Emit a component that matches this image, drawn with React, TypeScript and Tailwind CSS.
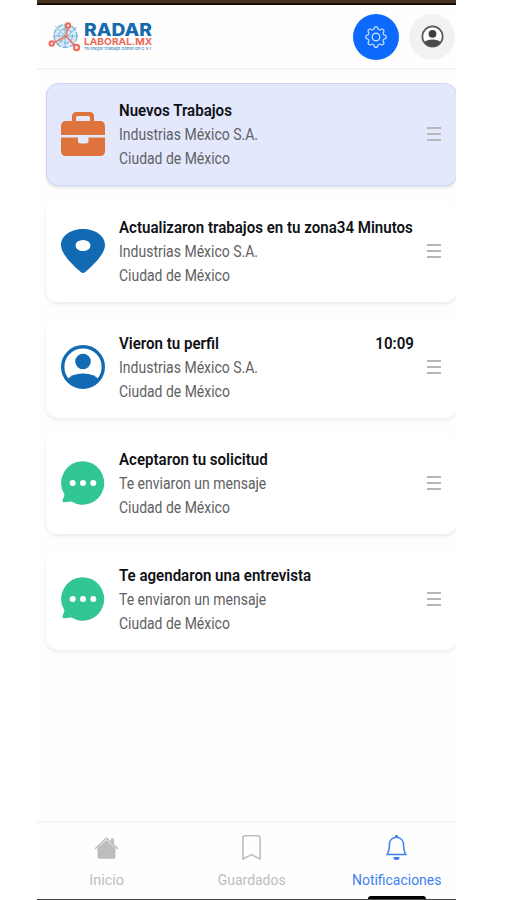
import type { ReactNode } from "react";
import { BsGear, BsBookmark, BsBell } from "react-icons/bs";

function Briefcase() {
  return (
    <svg className="h-[46px] w-[44px]" viewBox="0 0 44 46" fill="#df733c">
      <path fillRule="evenodd" d="M11 10V5.500Q11 1 15.500 1H28.500Q33 1 33 5.500V10H39Q44 10 44 15.500V24H0V15.500Q0 10 5 10ZM15 10H29V6.500Q29 5 27.500 5H16.500Q15 5 15 6.500Z" />
      <path d="M0 26.500H17V30Q17 32.500 19.500 32.500H25Q27.500 32.500 27.500 30V26.500H44V40Q44 45 39 45H5Q0 45 0 40Z" />
    </svg>
  );
}

function Pin() {
  return (
    <svg className="h-[46px] w-[44px]" viewBox="0 0 44 46">
      <path fillRule="evenodd" fill="#126ab3" d="M22 1C9.500 1 0 8 0 17C0 27 15 40 20 44.200Q22 45.700 24 44.200C29 40 44 27 44 17C44 8 34.500 1 22 1ZM22 12A7.500 5.500 0 1 1 22 23A7.500 5.500 0 1 1 22 12Z" />
    </svg>
  );
}

function Profile() {
  return (
    <svg className="h-[46px] w-[44px]" viewBox="0 0 44 46">
      <circle cx="22" cy="23" r="20.300" fill="white" stroke="#126ab3" strokeWidth="3.400" />
      <circle cx="22" cy="17.500" r="7.800" fill="#126ab3" />
      <path fill="#126ab3" d="M6 36Q10 29.500 22 29.500T38 36Q32 44 22 44T6 36Z" />
    </svg>
  );
}

function Chat() {
  return (
    <svg className="h-[46px] w-[44px]" viewBox="0 0 44 46">
      <path fill="#32c694" d="M22 1.200A21.500 21.800 0 1 1 10.500 41.600L2.800 42.200Q1 42 1.700 40L3.500 34.500A21.600 21.800 0 0 1 22 1.200Z" />
      <g fill="white"><circle cx="11.700" cy="23" r="3" /><circle cx="22" cy="23" r="3" /><circle cx="32.300" cy="23" r="3" /></g>
    </svg>
  );
}

function House() {
  return (
    <svg className="size-[25px]" viewBox="0 0 25 25">
      <path fill="#bdbdbf" d="M3.500 13L12.500 5L21.500 13V22Q21.500 23.800 19.500 23.800H5.500Q3.500 23.800 3.500 22ZM17 3.500H20V10L17 7.500Z" />
      <path fill="none" stroke="#bdbdbf" strokeWidth="1.600" strokeLinecap="round" strokeLinejoin="round" d="M1.500 13.500L12.500 3L23.500 13.500" />
    </svg>
  );
}

function Menu() {
  return (
    <span className="flex w-[14px] shrink-0 flex-col gap-1">
      <i className="h-[2px] bg-[#b7b7b9]" /><i className="h-[2px] bg-[#b7b7b9]" /><i className="h-[2px] bg-[#b7b7b9]" />
    </span>
  );
}

function Card({ icon, title, time, sub, active = false }: { icon: ReactNode; title: string; time?: string; sub: string; active?: boolean }) {
  return (
    <article className={`flex h-[103px] w-[411px] shrink-0 items-center rounded-[12px] ${active ? "border border-[#cbd5f3] bg-[#e3e8fd] pb-[2px] pl-[14px] pr-[15px] shadow-[0_2px_3px_#0000001a]" : "bg-white pl-[15px] pr-4 shadow-[0_2px_4px_#00000014]"}`}>
      {icon}
      <div className={`ml-[14px] w-[295px] shrink-0 whitespace-nowrap text-[16px] leading-[24px] ${active ? "pt-[2px]" : "pt-[3px]"}`}>
        <div className="flex justify-between font-semibold text-[#101116]">
          <span className="w-0"><span className="inline-block origin-left scale-x-[0.942]">{title}</span></span>
          {time && <span className="inline-block origin-right scale-x-[0.942]">{time}</span>}
        </div>
        <div className="w-0 text-[#616164]"><span className="inline-block origin-left scale-x-[0.875]">{sub}</span></div>
        <div className="w-0 text-[#616164]"><span className="inline-block origin-left scale-x-[0.872]">Ciudad de México</span></div>
      </div>
      <span className="ml-auto"><Menu /></span>
    </article>
  );
}

function Logo() {
  return (
    <div className="flex h-[34px] items-center">
      <svg className="h-[32px] w-[34px]" viewBox="0 0 34 32" fill="none">
        <circle cx="17.500" cy="15" r="11.500" fill="#d7ebf6" stroke="#86b9dc" strokeWidth="1.500" strokeDasharray="6 1.500" />
        <circle cx="17.500" cy="15" r="7" stroke="#8abfe0" strokeWidth="1.300" strokeDasharray="5 2" />
        <path stroke="#5f9fca" d="M17 5V27M5 15H30M7 5L26 24M29 6L9 24" strokeWidth=".7" />
        <path stroke="#ee7669" strokeWidth="1.800" d="M20 5L18 15L4 23M18 15L28 26" />
        <g fill="#ffe0da" stroke="#ed6a5d" strokeWidth="2"><circle cx="20" cy="4.500" r="2.200" /><circle cx="3.700" cy="22.500" r="2.200" /><circle cx="28.500" cy="26.500" r="2.700" /></g>
      </svg>
      <div className="ml-[2px] w-[69px] whitespace-nowrap pt-px font-[Inter,sans-serif]">
        <div className="w-max origin-left scale-x-[1.13] text-[17px] font-extrabold leading-[14px] text-[#1769ad]">RADAR</div>
        <div className="w-max origin-left scale-x-[1.07] text-[9.500px] font-bold leading-[9px] text-[#ed6758]">LABORAL.MX</div>
        <div className="w-max origin-left scale-x-[1.15] text-[4px] font-semibold leading-[6px] text-[#5792be]">Tu mejor trabajo como en c.v.!</div>
      </div>
    </div>
  );
}

export default function App() {
  return (
    <div className="h-[900px] w-[506px] overflow-hidden bg-white pl-[37px] font-[Roboto,sans-serif]">
      <main className="flex h-full w-[419px] flex-col overflow-hidden bg-[#fefefe]">
        <div className="h-[5px] shrink-0 border-b-2 border-[#190c0a] bg-[#49351f]" />
        <header className="flex h-[65px] shrink-0 items-center border-b-2 border-[#f3f4f5] pl-[11px] pr-px">
          <Logo />
          <div className="ml-auto flex gap-[10px]">
            <button className="flex size-[46px] items-center justify-center rounded-full bg-[#0c6bfd] text-[#bad8ff]"><BsGear size={22} /></button>
            <button className="flex size-[46px] items-center justify-center rounded-full bg-[#f2f2f2]">
              <svg className="size-[23px]" viewBox="0 0 24 24"><circle cx="12" cy="12" r="10.600" fill="white" stroke="#5b5b5d" strokeWidth="1.800" /><circle cx="12" cy="9.200" r="4.100" fill="#3e3e40" /><path fill="#4a4a4c" d="M3.500 18Q6 15 12 15T20.500 18Q17 22.500 12 22.500T3.500 18Z" /></svg>
            </button>
          </div>
        </header>
        <section className="flex flex-1 flex-col gap-[13px] pl-[9px] pt-[13px]">
          <Card icon={<Briefcase />} title="Nuevos Trabajos" sub="Industrias México S.A." active />
          <Card icon={<Pin />} title="Actualizaron trabajos en tu zona34 Minutos" sub="Industrias México S.A." />
          <Card icon={<Profile />} title="Vieron tu perfil" time="10:09" sub="Industrias México S.A." />
          <Card icon={<Chat />} title="Aceptaron tu solicitud" sub="Te enviaron un mensaje" />
          <Card icon={<Chat />} title="Te agendaron una entrevista" sub="Te enviaron un mensaje" />
        </section>
        <nav className="flex h-[79px] shrink-0 flex-col border-t-2 border-[#f5f5f5]">
          <div className="grid h-[73px] shrink-0 grid-cols-[139px_151px_139px] pt-[12px] text-[15.500px] leading-[20px] text-[#bdbdbf]">
            <a className="flex flex-col items-center"><House /><span className="mt-[10px] scale-x-[0.93]">Inicio</span></a>
            <a className="flex flex-col items-center"><BsBookmark size={25} /><span className="mt-[10px] scale-x-[0.9]">Guardados</span></a>
            <a className="flex flex-col items-center text-[#3f7ff0]"><BsBell size={25} /><span className="mt-[10px] scale-x-[0.9]">Notificaciones</span></a>
          </div>
          <div className="ml-[331px] h-[3px] w-[58px] shrink-0 rounded-t bg-black" />
          <div className="h-px shrink-0 bg-[#444]" />
        </nav>
      </main>
    </div>
  );
}
